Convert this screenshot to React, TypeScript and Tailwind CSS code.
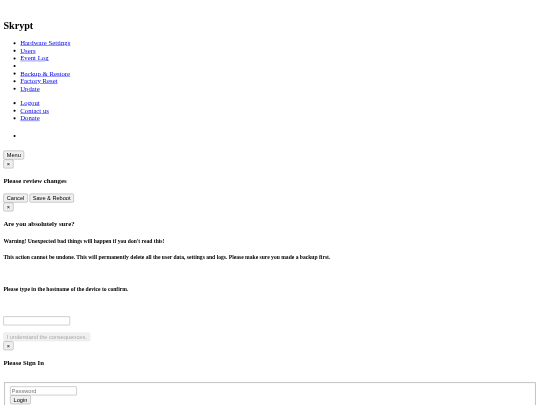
// Unstyled browser-default page, laid out at 1280px and scaled down to the 540px window.
const LINK = 'text-[#0000ee] underline';
const UL = 'list-disc pl-10 my-4';
const BTN =
  'block border border-[#8f8f8f] rounded-[3px] bg-[#efefef] px-[7px] py-[2px] text-[13.333px] leading-[15px] text-black font-["Liberation_Sans",sans-serif]';
const INPUT =
  'block w-[158px] h-[21px] border border-[#8f8f8f] rounded-[2px] px-[3px] text-[13.333px] font-["Liberation_Sans",sans-serif] placeholder:text-[#757575]';
const H4 = 'text-base font-bold my-[21px] leading-[18px]';
const H5 = 'text-[13.28px] font-bold my-[22px] leading-[15px]';

function NavList({ items, className = UL }: { items: string[]; className?: string }) {
  return (
    <ul className={className}>
      {items.map((item, i) => (
        <li key={i} className="min-h-[18px] leading-[18px]">
          {item && (
            <a href="#" className={LINK}>
              {item}
            </a>
          )}
        </li>
      ))}
    </ul>
  );
}

export default function App() {
  return (
    <div className="h-[405px] w-[540px] overflow-hidden bg-white">
      <div className='w-[1280px] origin-top-left scale-[0.421875] blur-[1px] p-2 text-black text-base leading-[18px] font-["Liberation_Serif",serif]'>
        <h2 className="text-[24px] font-bold leading-[28px] mt-[39px] mb-[18px]">Skrypt</h2>

        <NavList items={['Hardware Settings', 'Users', 'Event Log', '', 'Backup & Restore', 'Factory Reset', 'Update']} />
        <NavList items={['Logout', 'Contact us', 'Donate']} />
        <NavList items={['']} className="list-disc pl-10 mt-[24px]" />

        <button className={`${BTN} mt-[26px]`}>Menu</button>
        <button className={BTN}>×</button>
        <h4 className={H4}>Please review changes</h4>
        <div className="flex gap-1">
          <button className={BTN}>Cancel</button>
          <button className={BTN}>Save &amp; Reboot</button>
        </div>
        <button className={BTN}>×</button>

        <h4 className={H4}>Are you absolutely sure?</h4>
        <h5 className={`${H5} mt-[24px]`}>Warning! Unexpected bad things will happen if you don't read this!</h5>
        <h5 className={H5}>
          This action cannot be undone. This will permanently delete all the user data, settings and logs. Please make
          sure you made a backup first.
        </h5>
        <h5 className={`${H5} pt-[39px]`}>Please type in the hostname of the device to confirm.</h5>
        <input className={`${INPUT} mt-[58px]`} />
        <button
          disabled
          className='block mt-[17px] border border-[#e8e8e8] rounded-[3px] bg-[#f0f0f0] px-[7px] py-[2px] text-[13.333px] leading-[15px] text-[#a8a8a8] font-["Liberation_Sans",sans-serif]'
        >
          I understand the consequences.
        </button>
        <button className={BTN}>×</button>

        <h4 className="text-base font-bold mt-[20px] leading-[18px]">Please Sign In</h4>
        <fieldset className="mx-[2px] mt-[38px] border-2 border-[#b8b8b8] px-3 pt-[8px] pb-[8px]">
          <input type="password" placeholder="Password" className={INPUT} />
          <button className={BTN}>Login</button>
        </fieldset>
      </div>
    </div>
  );
}
